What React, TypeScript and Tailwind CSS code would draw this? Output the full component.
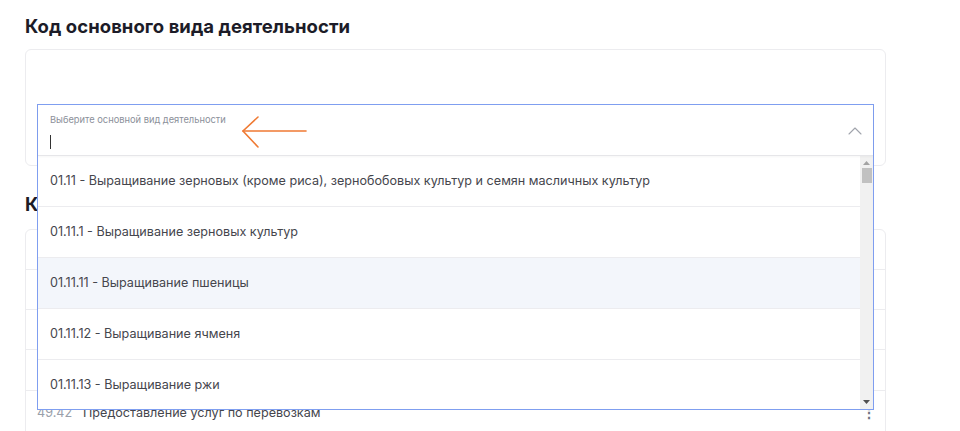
import { ChevronUp } from 'lucide-react';

const options = [
  '01.11 - Выращивание зерновых (кроме риса), зернобобовых культур и семян масличных культур',
  '01.11.1 - Выращивание зерновых культур',
  '01.11.11 - Выращивание пшеницы',
  '01.11.12 - Выращивание ячменя',
  '01.11.13 - Выращивание ржи',
];

const Scrollbar = () => (
  <div className="flex w-[13px] shrink-0 flex-col items-center bg-[#f1f1f1]">
    <svg width="7" height="4" viewBox="0 0 7 4" className="mt-[5px]">
      <path d="M3.5 0 L7 4 L0 4 Z" fill="#a3a3a3" />
    </svg>
    <div className="mt-[3px] h-[15px] w-[10px] bg-[#c1c1c1]" />
    <div className="flex-1" />
    <svg width="7" height="4" viewBox="0 0 7 4" className="mb-[5px]">
      <path d="M0 0 L7 0 L3.5 4 Z" fill="#505050" />
    </svg>
  </div>
);

const App = () => {
  return (
    <div className="h-[431px] w-[960px] overflow-hidden bg-white px-[25px] pt-[14px] font-['Inter',sans-serif] text-[#1c1c28]">
      <h2 className="h-[24px] text-[18.5px] leading-[24px] font-bold tracking-[0.05px]">
        Код основного вида деятельности
      </h2>

      {/* Card with open select */}
      <div className="relative z-10 mt-[11px] w-[861px] rounded-[6px] border border-[#ececef] px-[11px] pt-[54px] pb-[10px]">
        <div className="relative h-[51px]">
          <div className="absolute top-0 right-0 left-0 flex flex-col border border-[#7f9ef0] bg-white">
            <div className="relative flex h-[51px] items-start border-b border-[#e6e6e9] px-[12px] pt-[9px] shadow-[0_1px_2px_rgba(0,0,0,0.04)]">
              <div className="flex flex-col">
                <span className="text-[9.3px] leading-[12px] text-[#8b909a]">
                  Выберите основной вид деятельности
                </span>
                <span className="mt-[9px] h-[14px] w-px bg-[#333]" />
              </div>
              {/* annotation arrow */}
              <svg
                width="66"
                height="34"
                viewBox="0 0 66 34"
                className="absolute top-[11px] left-[203px]"
                fill="none"
                stroke="#ef7a33"
                strokeWidth="1.6"
                strokeLinecap="round"
              >
                <path d="M2 15 H65" />
                <path d="M17 1 L2 15 L17 31" />
              </svg>
              <ChevronUp
                className="absolute top-[14px] right-[6px] h-[24px] w-[24px] text-[#a0a4ac]"
                strokeWidth={1.1}
              />
            </div>
            <div className="flex h-[253px]">
              <ul className="flex flex-1 flex-col">
                {options.map((opt, i) => (
                  <li
                    key={opt}
                    className={`flex items-center px-[12px] pt-[1px] text-[12.6px] text-[#45464d] ${
                      i < options.length - 1 ? 'h-[51px] border-b border-[#ececef]' : 'h-[49px]'
                    } ${i === 2 ? 'bg-[#f3f6fb]' : 'bg-white'}`}
                  >
                    {opt}
                  </li>
                ))}
              </ul>
              <Scrollbar />
            </div>
          </div>
        </div>
      </div>

      <h2 className="mt-[26px] h-[24px] text-[18.5px] leading-[24px] font-bold">
        Коды дополнительных видов деятельности
      </h2>

      {/* Background card with additional codes, mostly covered by the open list */}
      <div className="mt-[13px] w-[861px] rounded-t-[6px] border border-[#ececef]">
        <div className="h-[40px] border-b border-[#ececef]" />
        <div className="h-[40px] border-b border-[#ececef]" />
        <div className="h-[40px] border-b border-[#ececef]" />
        <div className="h-[41px] border-b border-[#ececef]" />
        <div className="flex h-[40px] items-center px-[11px] pt-[4px] text-[12.6px]">
          <span className="w-[46px] text-[#9aa0aa]">49.42</span>
          <span className="flex-1 text-[#45464d]">Предоставление услуг по перевозкам</span>
          <span className="w-[12px] text-center text-[14px] leading-none font-bold text-[#6d7280]">⋮</span>
        </div>
      </div>
    </div>
  );
};

export default App;
